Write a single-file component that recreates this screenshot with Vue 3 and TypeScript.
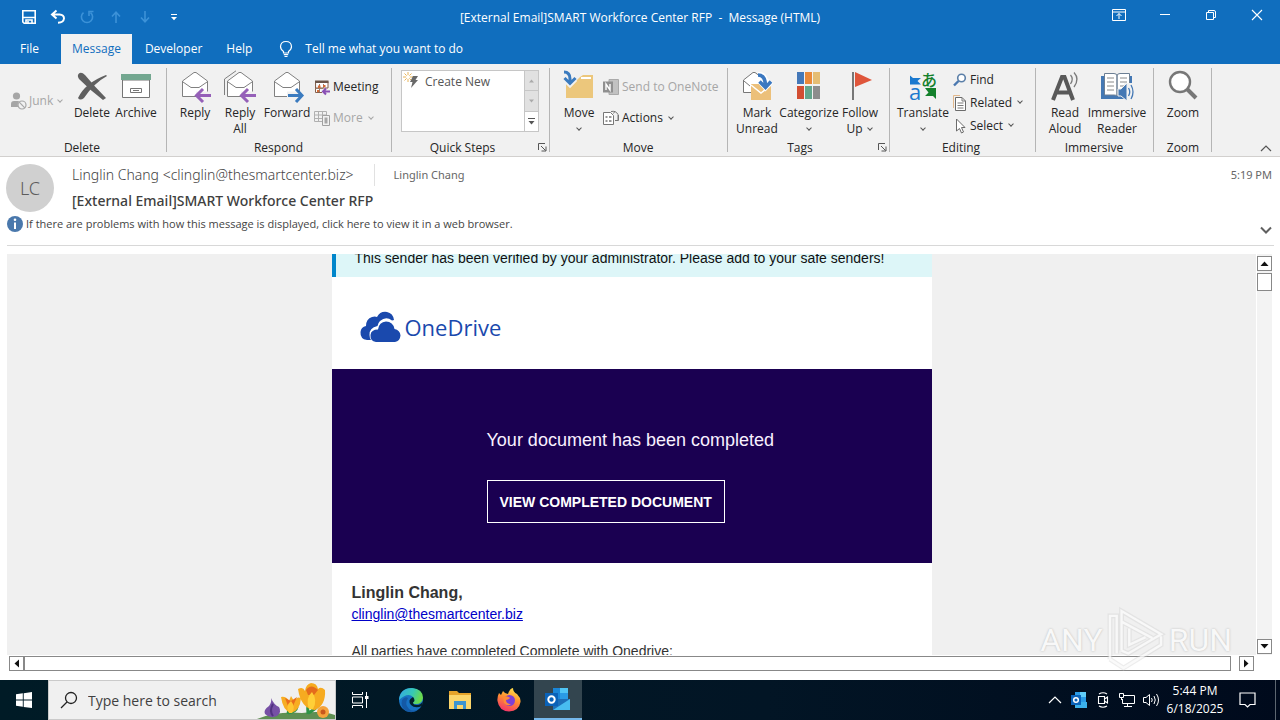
<script setup lang="ts">
import { ref } from 'vue'

const tabs = ['File', 'Message', 'Developer', 'Help']
const activeTab = ref('Message')
const search = ref('')
const sender = 'Linglin Chang <clinglin@thesmartcenter.biz>'
const subject = '[External Email]SMART Workforce Center RFP'
</script>

<template>
  <div class="window">
    <header class="titlebar">
      <div class="quick">
        <button aria-label="Save">
          <svg width="16" height="16" viewBox="0 0 16 16"><path d="M1.8 1.8H14.2V14.2H3.2L1.8 12.8Z M2 8.5H14 M5 14V11H11V14 M7 12V14" fill="none" stroke="#fff" stroke-width="1.6" /></svg>
        </button>
        <button aria-label="Undo">
          <svg width="16" height="16" viewBox="0 0 16 16"><path d="M6.5 1.5L2 5.5L6.5 9.5 M2.5 5.5H9.5Q14 5.8 14 9.5Q13.5 13.5 8 13.8" fill="none" stroke="#fff" stroke-width="2" /></svg>
        </button>
        <button aria-label="Redo">
          <svg width="16" height="16" viewBox="0 0 16 16"><path d="M4.5 3.6A5.6 5.6 0 1 0 11.5 3.6 M10 7V2.5H14.5" fill="none" stroke="#3c92d8" stroke-width="1.6" /></svg>
        </button>
        <button aria-label="Previous item">
          <svg width="16" height="16" viewBox="0 0 16 16"><path d="M8 14V3.5 M4 7.5L8 3.2L12 7.5" fill="none" stroke="#3c92d8" stroke-width="1.6" /></svg>
        </button>
        <button aria-label="Next item">
          <svg width="16" height="16" viewBox="0 0 16 16"><path d="M8 2V12.5 M4 8.5L8 12.8L12 8.5" fill="none" stroke="#3c92d8" stroke-width="1.6" /></svg>
        </button>
        <button aria-label="Customize toolbar">
          <svg width="16" height="16" viewBox="0 0 16 16"><path d="M5 5.5H11" stroke="#fff" /><path d="M5 8H11L8 11.2Z" fill="#fff" /></svg>
        </button>
      </div>
      <div class="title">{{ subject }}&nbsp; -&nbsp; Message (HTML)</div>
      <div class="winbtns">
        <button aria-label="Ribbon display options">
          <svg width="14" height="12" viewBox="0 0 14 12"><path d="M.5 .5H13.5V11.5H.5Z M.5 3H13.5 M7 10V4.5 M4.5 7L7 4.5L9.5 7" fill="none" stroke="#fff" /></svg>
        </button>
        <button aria-label="Minimize">
          <svg width="12" height="12" viewBox="0 0 12 12"><path d="M1 5.5H11" stroke="#fff" /></svg>
        </button>
        <button aria-label="Restore">
          <svg width="12" height="12" viewBox="0 0 12 12"><path d="M1.5 3.5H8.5V10.5H1.5Z M3.5 3.5V1.5H9Q10.5 1.5 10.5 3V8.5H8.5" fill="none" stroke="#fff" /></svg>
        </button>
        <button aria-label="Close">
          <svg width="12" height="12" viewBox="0 0 12 12"><path d="M1 1L11 11M11 1L1 11" stroke="#fff" stroke-width="1.1" /></svg>
        </button>
      </div>
    </header>

    <nav class="tabs">
      <button v-for="t in tabs" :key="t" :class="{ active: t === activeTab }" @click="activeTab = t">{{ t }}</button>
      <button class="tell">
        <svg width="14" height="18" viewBox="0 0 14 18"><path d="M4.5 13V11.5Q1.5 9.5 1.5 6.5Q1.8 1.5 7 1.5Q12.2 1.5 12.5 6.5Q12.5 9.5 9.5 11.5V13Z M4.8 14.6H9.2 M5.5 16.5H8.5" fill="none" stroke="#fff" stroke-width="1.2" /></svg>
        Tell me what you want to do
      </button>
    </nav>

    <section class="ribbon">
      <div class="group g-delete">
        <div class="tools">
          <button class="small off junk">
            <svg width="16" height="18" viewBox="0 0 16 18"><circle cx="5.5" cy="4" r="3.6" fill="#a6a6a6" /><path d="M0 15V12Q0 9 3 9H8Q6 12 7 15Z" fill="#a6a6a6" /><circle cx="11" cy="13" r="4" fill="#f1f1f1" stroke="#a6a6a6" stroke-width="1.2" /><path d="M8.2 10.2L13.8 15.8" stroke="#a6a6a6" stroke-width="1.2" /></svg>
            <span>Junk</span><i class="chev" />
          </button>
          <button class="big w42">
            <svg width="32" height="32" viewBox="0 0 32 32"><path d="M2.500 4Q5 1 9 5Q18 16 30 28L27 30Q15 21 3 9Q1 6 2.500 4Z" fill="#606060" /><path d="M31 6Q18 13 8 28Q4 31 2 28Q9 13 30 5Z" fill="#606060" /></svg>
            <span>Delete</span>
          </button>
          <button class="big w46">
            <svg width="32" height="32" viewBox="0 0 32 32"><path d="M2.5 10H29.5V27.5H2.5Z" fill="#fff" stroke="#757575" /><path d="M1 4H31V10H1Z" fill="#73a790" /><path d="M10.5 18.5H21.5V22.5H10.5Z" fill="none" stroke="#757575" /><path d="M13 20.5H19" stroke="#757575" /></svg>
            <span>Archive</span>
          </button>
        </div>
        <footer>Delete</footer>
      </div>

      <div class="group g-respond">
        <div class="tools">
          <button class="big w44">
            <svg width="32" height="32" viewBox="0 0 32 32"><path d="M3.5 26.5V11L15 2.5H17L28.5 11V26.5Z" fill="#fff" stroke="#808080" /><path d="M4 12L12 17.500H20L28 12" fill="none" stroke="#808080" /><path d="M17 25.5H32" stroke="#f1f1f1" stroke-width="8" /><path d="M18 25.5H32 M24 19L17.5 25.5L24 32" fill="none" stroke="#9560b8" stroke-width="3" /></svg>
            <span>Reply</span>
          </button>
          <button class="big w46">
            <svg width="32" height="32" viewBox="0 0 32 32"><path d="M.5 25V9L12 .8" fill="none" stroke="#808080" /><path d="M3.5 26.5V11L15 2.5H17L28.5 11V26.5Z" fill="#fff" stroke="#808080" /><path d="M4 12L12 17.500H20L28 12" fill="none" stroke="#808080" /><path d="M17 25.5H32" stroke="#f1f1f1" stroke-width="8" /><path d="M18 25.5H32 M24 19L17.5 25.5L24 32" fill="none" stroke="#9560b8" stroke-width="3" /></svg>
            <span>Reply<br>All</span>
          </button>
          <button class="big w48">
            <svg width="32" height="32" viewBox="0 0 32 32"><path d="M3.5 26.5V11L15 2.5H17L28.5 11V26.5Z" fill="#fff" stroke="#808080" /><path d="M4 12L12 17.500H20L28 12" fill="none" stroke="#808080" /><path d="M16 25.5H32" stroke="#f1f1f1" stroke-width="8" /><path d="M17 25.5H30 M25 19L31 25.5L25 32" fill="none" stroke="#3b7bbf" stroke-width="3" /></svg>
            <span>Forward</span>
          </button>
          <div class="stack two">
            <button class="small">
              <svg width="16" height="16" viewBox="0 0 16 16"><path d="M1.5 2.5H14V9H1.500V2.500V13.500H8" fill="#fff" stroke="#85604c" /><path d="M5.5 5V13 M9.5 5V9 M1.5 9.5H9" fill="none" stroke="#9b7c68" /><path d="M1 1.5H14.5V4H1Z" fill="#6b5549" /><path d="M4 6.5H6.5V9H4Z M9 6H11.5V8H9Z M3 11H5V13H3Z" fill="#d56a35" /><path d="M9 12.500H16 M12 9.500L9 12.500L12 15.500" fill="none" stroke="#8a4fb5" stroke-width="2" /></svg>
              <span>Meeting</span>
            </button>
            <button class="small off">
              <svg width="16" height="16" viewBox="0 0 16 16"><path d="M.5 1.5H12.5V5 M8 11.5H.5V1.5 M.5 5H12 M4.5 2V11 M8.5 2V6 M1 8.5H8" fill="none" stroke="#b0b0b0" /><path d="M8.5 5.5H15.5V15.5H8.5Z" fill="#f1f1f1" stroke="#a0a0a0" /><path d="M10.5 7.5H13.5V13.5H10.5Z" fill="#a6a6a6" /></svg>
              <span>More</span><i class="chev" />
            </button>
          </div>
        </div>
        <footer>Respond</footer>
      </div>

      <div class="group g-steps">
        <div class="tools">
          <div class="gallery">
            <button class="small">
              <svg width="22" height="20" viewBox="0 0 22 20"><path d="M6 0V10M1 5H11M2.5 1.5L9.5 8.5M9.5 1.5L2.5 8.5" stroke="#e8b45a" /><circle cx="6" cy="5" r="2" fill="#fff" /><path d="M11 4H16L13.5 8H16L9 16L10.5 10H8Z" fill="#696969" /></svg>
              <span>Create New</span>
            </button>
            <div class="updown">
              <button aria-label="Scroll up"><svg width="7" height="4" viewBox="0 0 7 4"><path d="M1 3.5L3.5 .5L6 3.5Z" fill="#aaa" /></svg></button>
              <button aria-label="Scroll down"><svg width="7" height="4" viewBox="0 0 7 4"><path d="M1 .5L3.5 3.5L6 .5Z" fill="#aaa" /></svg></button>
              <button aria-label="More steps" class="on"><svg width="7" height="7" viewBox="0 0 7 7"><path d="M0 .5H7" stroke="#555" /><path d="M.5 3H6.5L3.5 6.5Z" fill="#555" /></svg></button>
            </div>
          </div>
        </div>
        <footer>Quick Steps</footer>
        <button class="launcher" aria-label="Quick Steps options"><svg width="9" height="9" viewBox="0 0 9 9"><path d="M.5 7V.5H7 M3 3L7.5 7.5 M8 3.5V8H3.5" fill="none" stroke="#555" /></svg></button>
      </div>

      <div class="group g-move">
        <div class="tools">
          <button class="big w46">
            <svg width="32" height="32" viewBox="0 0 32 32"><path d="M3 28V11H13L17 7L20 5H30V28Z" fill="#ecc77c" /><path d="M18 8H28" stroke="#fff" stroke-width="2" /><path d="M1 1.5Q7 1 7 9V13 M2 9L7 14L12 9" fill="none" stroke="#f1f1f1" stroke-width="6" /><path d="M1 2Q7 2 7 9V13 M1.5 8L7 13.5L12.500 8" fill="none" stroke="#3b7bbf" stroke-width="3" /></svg>
            <span>Move</span><i class="chev" />
          </button>
          <div class="stack two">
            <button class="small off">
              <svg width="16" height="16" viewBox="0 0 16 16"><path d="M6 .5H15.5V15.5H6Z" fill="#c2c2c2" stroke="#aaa" /><path d="M0 2.5H10V13.5H0Z" fill="#909090" /><path d="M3 11V5L7 11V5" fill="none" stroke="#fff" stroke-width="1.4" /></svg>
              <span>Send to OneNote</span>
            </button>
            <button class="small">
              <svg width="16" height="16" viewBox="0 0 16 16"><path d="M.5 2.5H7.5L10.5 5.5V14.5H.5Z" fill="#fff" stroke="#777" /><path d="M2.5 7H4.5M2.5 11H4.5M6 7H8.5M6 11H8.5" stroke="#777" stroke-width="1.6" /><path d="M8 1.5Q13 .5 15 4.5V10 M10.5 3.5L12 1M12 10.500H15.500V5" fill="none" stroke="#777" /></svg>
              <span>Actions</span><i class="chev" />
            </button>
          </div>
        </div>
        <footer>Move</footer>
      </div>

      <div class="group g-tags">
        <div class="tools">
          <button class="big w46">
            <svg width="32" height="32" viewBox="0 0 32 32"><path d="M2.5 22.5V10L12 2.5H14L24 10V22.5Z" fill="#fff" stroke="#777" /><path d="M3 11L9 16" stroke="#777" /><path d="M10 14H30V30H10Z" fill="#ecc07a" /><path d="M10 15L20 23L30 15" fill="none" stroke="#fff" stroke-width="1.5" /><path d="M17 5Q24 4 24.500 14 M19 11L24.500 17L30 11" fill="none" stroke="#fff" stroke-width="6" /><path d="M17 5Q24 5 24.500 15 M18.500 11.500L24.500 17.500L30 11.500" fill="none" stroke="#3b78c0" stroke-width="3.500" /></svg>
            <span>Mark<br>Unread</span>
          </button>
          <button class="big w58">
            <svg width="32" height="32" viewBox="0 0 32 32"><path d="M4 2H11V14H4Z" fill="#4478b8" /><path d="M12 2H19V14H12Z" fill="#e98939" /><path d="M20 2H27V14H20Z" fill="#e5bd73" /><path d="M4 16H11V29H4Z" fill="#d24e32" /><path d="M12 16H19V29H12Z" fill="#63a68c" /><path d="M20 16H27V29H20Z" fill="#8d8d8d" /></svg>
            <span>Categorize</span><i class="chev" />
          </button>
          <button class="big w44">
            <svg width="32" height="32" viewBox="0 0 32 32"><path d="M9 2V30" stroke="#777" stroke-width="2" /><path d="M11 2L28 10L11 17Z" fill="#df563b" /></svg>
            <span>Follow<br>Up <i class="chev" /></span>
          </button>
        </div>
        <footer>Tags</footer>
        <button class="launcher" aria-label="Tags options"><svg width="9" height="9" viewBox="0 0 9 9"><path d="M.5 7V.5H7 M3 3L7.5 7.5 M8 3.5V8H3.5" fill="none" stroke="#555" /></svg></button>
      </div>

      <div class="group g-editing">
        <div class="tools">
          <button class="big w58">
            <svg width="32" height="32" viewBox="0 0 32 32"><path d="M3 5.500L6 8H14L10.500 11L14 14.500H3Z" fill="#1b79cf" /><path d="M29 18V29L26 26H18L21.500 22.500L18 18Z" fill="#14812c" /><text x="2" y="30" class="glyph-a">a</text><text x="14" y="16" class="glyph-j">あ</text></svg>
            <span>Translate</span><i class="chev" />
          </button>
          <div class="stack three">
            <button class="small">
              <svg width="14" height="14" viewBox="0 0 14 14"><circle cx="8.500" cy="5" r="3.800" fill="#fff" stroke="#5b7fa8" stroke-width="1.600" /><path d="M5.500 8L1 12.500" stroke="#4a78b0" stroke-width="2.400" /></svg>
              <span>Find</span>
            </button>
            <button class="small">
              <svg width="14" height="16" viewBox="0 0 14 16"><path d="M.5 13V.5H7" fill="none" stroke="#e3b98d" /><path d="M2.500 2.500H9L12.500 6V15.500H2.500Z" fill="#fff" stroke="#6b6b6b" /><path d="M9 2.500V6H12.500 M4.500 8H10.500M4.500 10.500H10.500M4.500 13H10.500" fill="none" stroke="#7b7b7b" /></svg>
              <span>Related</span><i class="chev" />
            </button>
            <button class="small">
              <svg width="14" height="16" viewBox="0 0 14 16"><path d="M3.500 1V13L6.500 10.500L8.500 15L10.500 14L8.500 9.500H12Z" fill="#fff" stroke="#6b6b6b" /></svg>
              <span>Select</span><i class="chev" />
            </button>
          </div>
        </div>
        <footer>Editing</footer>
      </div>

      <div class="group g-immersive">
        <div class="tools">
          <button class="big w46">
            <svg width="32" height="32" viewBox="0 0 32 32"><path d="M4 30L13 7H15.500L24 30 M8 22.500H20" fill="none" stroke="#595959" stroke-width="4" /><path d="M21.500 5Q25 9 21.500 14 M25 2.500Q31 9 25 17" fill="none" stroke="#7a7a7a" stroke-width="1.300" /></svg>
            <span>Read<br>Aloud</span>
          </button>
          <button class="big w58">
            <svg width="32" height="32" viewBox="0 0 32 32"><path d="M0 6H31V29H0Z" fill="#4478b4" /><path d="M3.500 3.500H13Q16 3.500 16 6V26Q15 25 13 25H3.500Z M28.500 3.500H19Q16 3.500 16 6V26Q17 25 19 25H28.500Z" fill="#fff" stroke="#6c7f94" /><path d="M6 8H13M6 12H13M6 16H13M6 20H13M19 8H26M19 12H26M19 16H24" stroke="#8a8a8a" /><path d="M23 13H34V32H23Z" fill="#f1f1f1" /><path d="M17 19H20L26 13V31L20 26H17Z" fill="#4478b4" stroke="#f1f1f1" /><path d="M27.500 18Q30 22 27.500 26 M30 15Q34 22 30 29" fill="none" stroke="#4478b4" stroke-width="1.300" /></svg>
            <span>Immersive<br>Reader</span>
          </button>
        </div>
        <footer>Immersive</footer>
      </div>

      <div class="group g-zoom">
        <div class="tools">
          <button class="big w46">
            <svg width="32" height="32" viewBox="0 0 32 32"><path d="M19 18L29 28" stroke="#777" stroke-width="4" /><circle cx="13" cy="12" r="10" fill="#fff" stroke="#777" stroke-width="2.400" /></svg>
            <span>Zoom</span>
          </button>
        </div>
        <footer>Zoom</footer>
      </div>
      <button class="collapse" aria-label="Collapse the ribbon"><svg width="12" height="7" viewBox="0 0 12 7"><path d="M1 6L6 1L11 6" fill="none" stroke="#555" stroke-width="1.200" /></svg></button>
    </section>

    <section class="mailhead">
      <div class="who">
        <div class="avatar">LC</div>
        <div class="lines">
          <div class="from"><span class="sender">{{ sender }}</span><span class="to">Linglin Chang</span><time>5:19 PM</time></div>
          <h1>{{ subject }}</h1>
        </div>
      </div>
      <div class="info">
        <svg width="16" height="16" viewBox="0 0 16 16"><circle cx="8" cy="8" r="8" fill="#4a78ac" /><path d="M8 6.500V13" stroke="#fff" stroke-width="2" /><circle cx="8" cy="3.800" r="1.300" fill="#fff" /></svg>
        <button>If there are problems with how this message is displayed, click here to view it in a web browser.</button>
        <button class="expand" aria-label="Expand header"><svg width="12" height="8" viewBox="0 0 12 8"><path d="M1 1.500L6 6.500L11 1.500" fill="none" stroke="#606060" stroke-width="2" /></svg></button>
      </div>
    </section>

    <main class="reader">
      <div class="view">
        <article class="email">
          <p class="banner">This sender has been verified by your administrator. Please add to your safe senders!</p>
          <div class="logo">
            <svg width="41" height="32" viewBox="0 0 41 32"><path d="M9 29H7Q0 28 .5 21Q1 16 6 15Q6 8 12 6Q15 5 17 6Q20 0 27 1Q33 2 34 9L32 9.500Q26 5 20 10Q18 12 17.500 15Q9 17 9.500 24Q9.500 27 11 29Z" fill="#1a49ad" /><path d="M16 31Q10 30 10.500 24Q11 18.500 18 18.500Q19 11 26 10.500Q33 10.500 34.500 18Q40 19 40.500 24.500Q40 30 35 31Z" fill="#1a49ad" /></svg>
            <span>OneDrive</span>
          </div>
          <div class="hero">
            <p>Your document has been completed</p>
            <a href="#">VIEW COMPLETED DOCUMENT</a>
          </div>
          <div class="body">
            <h2>Linglin Chang,</h2>
            <a href="#">clinglin@thesmartcenter.biz</a>
            <p>All parties have completed Complete with Onedrive:</p>
          </div>
        </article>
      </div>
      <div class="vbar">
        <button aria-label="Scroll up"><svg width="9" height="5" viewBox="0 0 9 5"><path d="M.5 5L4.500 .5L8.500 5Z" fill="#111" /></svg></button>
        <div class="thumb" />
        <button class="end" aria-label="Scroll down"><svg width="9" height="5" viewBox="0 0 9 5"><path d="M.5 0L4.500 4.500L8.500 0Z" fill="#111" /></svg></button>
      </div>
      <div class="hbar">
        <button aria-label="Scroll left"><svg width="5" height="9" viewBox="0 0 5 9"><path d="M5 .5L.5 4.500L5 8.500Z" fill="#111" /></svg></button>
        <div class="track" />
        <button class="end" aria-label="Scroll right"><svg width="5" height="9" viewBox="0 0 5 9"><path d="M0 .5L4.500 4.500L0 8.500Z" fill="#111" /></svg></button>
      </div>
      <div class="mark" aria-hidden="true">
        <span>ANY</span>
        <svg width="54" height="64" viewBox="3 0 56 66"><path d="M4 53V8H11V47 M16 44V3L57 27L23 47L16 44 M16 14L48 31 M4 53L18 62L57 38V29 M24 21V38L41 30" fill="none" stroke="#cfcfcf" stroke-width="5" opacity=".45" /><path d="M4 53V8H11V47 M16 44V3L57 27L23 47L16 44 M16 14L48 31 M4 53L18 62L57 38V29 M24 21V38L41 30" fill="none" stroke="#fafafa" stroke-width="2.500" /></svg>
        <span>RUN</span>
      </div>
    </main>

    <footer class="taskbar">
      <button class="start" aria-label="Start"><svg width="16" height="16" viewBox="0 0 16 16"><path d="M0 2.200L6.800 1.300V7.500H0Z M7.700 1.200L16 0V7.500H7.700Z M0 8.400H6.800V14.700L0 13.800Z M7.700 8.400H16V16L7.700 14.900Z" fill="#fff" /></svg></button>
      <div class="search">
        <svg width="18" height="18" viewBox="0 0 18 18"><circle cx="11" cy="7" r="5.500" fill="none" stroke="#222" stroke-width="1.300" /><path d="M7 11L1 17" stroke="#222" stroke-width="1.300" /></svg>
        <input v-model="search" type="text" aria-label="Search" placeholder="Type here to search">
        <svg class="flowers" width="78" height="38" viewBox="0 0 78 38">
          <path d="M0 38Q20 30 45 32Q65 29 78 34V38Z" fill="#5e8f53" />
          <path d="M51 33Q50 22 53 15M31 33Q32 27 33 22M51 32Q58 29 64 21M31 32Q39 31 40 26" fill="none" stroke="#2e9447" stroke-width="3" />
          <path d="M14 17Q17 24 22 26Q25 31 20 35Q13 38 8 33Q6 29 12 25Q15 21 14 17Z" fill="#7650a5" /><path d="M16 23Q12 30 16 35" fill="none" stroke="#513281" stroke-width="2" />
          <path d="M24 16Q29 15 32 20L34 15L37 20Q40 15 44 17Q43 30 34 32Q26 30 24 16Z" fill="#f7ad22" /><path d="M28 17L34 20L40 16L36 25H31Z" fill="#e96d1c" /><path d="M32 32Q28 25 34 20Q39 26 35 32" fill="#ffc632" />
          <path d="M41 8Q46 5 48 10Q49 3 54 2Q60 2 61 8Q64 5 68 9Q69 24 58 29Q44 28 41 8Z" fill="#f6ab20" /><path d="M49 9Q54 2 61 9L57 14H51Z" fill="#e46b1c" /><path d="M52 28Q48 17 55 11Q61 19 56 28" fill="#ffcf38" />
          <circle cx="66" cy="31" r="6" fill="#f5a33c" /><circle cx="66" cy="31" r="2.500" fill="#c8571d" />
        </svg>
      </div>
      <div class="apps">
        <button class="view-tasks" aria-label="Task View"><svg width="18" height="16" viewBox="0 0 18 16"><path d="M1.500 0V2.500H11.500V0 M1.500 16V13.500H11.500V16 M1.500 5H11.500V11H1.500Z M15.500 0V16" fill="none" stroke="#fff" /><path d="M14 4H17.500V7H14Z" fill="#fff" /></svg></button>
        <button aria-label="Edge">
          <svg width="24" height="24" viewBox="0 0 24 24"><defs><linearGradient id="edge" x1="0" y1="0" x2="1" y2=".3"><stop offset="0" stop-color="#35a8e8" /><stop offset=".6" stop-color="#36c8b5" /><stop offset="1" stop-color="#6ada4c" /></linearGradient></defs><circle cx="12" cy="12" r="12" fill="#1873c4" /><path d="M0 12Q1 0 13 0Q24 1 24 10Q23 16 17 16Q13 16 14 14Q16 12 14 9Q9 4 0 12Z" fill="url(#edge)" /><path d="M9 10Q5 16 10 21Q14 24 20 21Q14 26 7 23Q1 19 3 12Q6 8 9 10Z" fill="#1459a5" /><path d="M14 9Q17 13 14 14.500Q14 17 18 17Q22 17 24 13L23 18Q16 21 12 17Q8 12 14 9Z" fill="#02202d" /></svg>
        </button>
        <button aria-label="File Explorer"><svg width="22" height="20" viewBox="0 0 22 20"><path d="M0 1H8L10 3H22V19H0Z" fill="#e5a32a" /><path d="M0 5H22V19H0Z" fill="#fbd56b" /><path d="M5 19V11H17V19H14V15H8V19Z" fill="#3d94d0" /></svg></button>
        <button aria-label="Firefox">
          <svg width="24" height="24" viewBox="0 0 24 24"><defs><linearGradient id="fox" x1=".7" y1="0" x2=".3" y2="1"><stop offset="0" stop-color="#ffe04a" /><stop offset=".45" stop-color="#ff9130" /><stop offset="1" stop-color="#f4306c" /></linearGradient></defs><path d="M2 5L4 7L6 3L8 5L11 6Q13 0 16 0Q16 4 20 6Q24 10 23.500 14Q22 23 12 23.500Q2 23 .5 13Q0 9 2 5Z" fill="url(#fox)" /><circle cx="12.500" cy="12.500" r="5.500" fill="#7d3fd6" /><path d="M6 9Q10 7 13 10Q11 12 9 12Q9 16 14 16Q10 19 7 15Z" fill="#ff8a36" /></svg>
        </button>
        <button class="running" aria-label="Outlook">
          <svg width="26" height="24" viewBox="0 0 26 24"><path d="M8 1H23V16H8Z" fill="#1a86d8" /><path d="M15 1H23V6H15Z" fill="#50c5f5" /><path d="M15 6H23V12H15Z" fill="#2a9be5" /><path d="M8 12L25 12V23H8Z" fill="#1d6fb8" /><path d="M25 12V23H8Z" fill="#48bdf0" /><path d="M0 6H13V19H0Z" fill="#0a62b8" /><circle cx="6.500" cy="12.500" r="3.200" fill="none" stroke="#fff" stroke-width="2" /></svg>
        </button>
      </div>
      <div class="tray">
        <button aria-label="Show hidden icons"><svg width="14" height="8" viewBox="0 0 14 8"><path d="M1 7L7 1L13 7" fill="none" stroke="#fff" stroke-width="1.200" /></svg></button>
        <button aria-label="Outlook status"><svg width="16" height="16" viewBox="0 0 16 16"><path d="M4 0H15V15H4Z" fill="#2a9be5" /><path d="M9 0H15V5H9Z" fill="#60cdf8" /><path d="M4 10H16V16H4Z" fill="#3cb1ea" /><path d="M0 3H10V13H0Z" fill="#0a62b8" /><circle cx="5" cy="8" r="2.300" fill="none" stroke="#fff" stroke-width="1.500" /></svg></button>
        <button aria-label="Meet Now"><svg width="16" height="16" viewBox="0 0 16 16"><path d="M3.500 4.500H9.500V11.500H3.500Z M9.500 7L12.500 5V11L9.500 9 M4 2Q8 -.5 12 2 M4 14Q8 16.500 12 14" fill="none" stroke="#fff" stroke-width="1.100" /></svg></button>
        <button aria-label="Network"><svg width="16" height="16" viewBox="0 0 16 16"><path d="M5 3.500H15.500V11.500H3.500V7 M8.500 11.500V14.500M5 14.500H13 M.5 1.500H4.500V5.500H.5Z M2.500 5.500V8" fill="none" stroke="#fff" /></svg></button>
        <button aria-label="Volume"><svg width="17" height="14" viewBox="0 0 17 14"><path d="M.5 4.500H3L6.500 1.500V12.500L3 9.500H.5Z M8.500 5Q10 7 8.500 9 M11 3Q13.500 7 11 11 M13.500 1Q17.500 7 13.500 13" fill="none" stroke="#fff" /></svg></button>
        <button class="clock">5:44 PM<br>6/18/2025</button>
        <button class="note" aria-label="Notifications"><svg width="17" height="16" viewBox="0 0 17 16"><path d="M1 1H16V12.500H11L8.500 15L6 12.500H1Z" fill="none" stroke="#fff" stroke-width="1.200" /></svg></button>
        <button class="peek" aria-label="Show desktop" />
      </div>
    </footer>
  </div>
</template>

<style>
html, body { margin: 0; height: 100%; }
</style>

<style scoped>
.window { height: 100vh; display: flex; flex-direction: column; background: #fff; font: 12px/16px "Open Sans", "Noto Sans", sans-serif; color: #262626; overflow: hidden; }
.window * { box-sizing: border-box; }
button { font: inherit; color: inherit; background: none; border: 0; padding: 0; margin: 0; }
svg { display: block; flex: none; overflow: visible; }
h1, h2, p { margin: 0; }

.titlebar { display: flex; height: 34px; background: #106ebe; color: #fff; }
.quick, .winbtns { flex: 1; display: flex; align-items: center; }
.quick button { width: 29px; display: flex; justify-content: center; }
.quick button:first-child { margin-left: 14px; }
.title { padding-top: 1px; line-height: 33px; white-space: nowrap; }
.winbtns { justify-content: flex-end; height: 30px; }
.winbtns button { width: 46px; display: flex; justify-content: center; }

.tabs { display: flex; height: 30px; background: #106ebe; color: #fff; }
.tabs button { padding: 0 11px; margin-right: 2px; }
.tabs button:first-child { padding: 0 20px; }
.tabs .active { background: #f1f1f1; color: #106ebe; }
.tabs .tell { display: flex; align-items: center; gap: 12px; padding-left: 14px; }

.ribbon { display: flex; position: relative; height: 93px; background: #f1f1f1; border-bottom: 1px solid #d2d0ce; }
.group { position: relative; display: flex; flex-direction: column; padding-top: 4px; }
.group::after { content: ""; position: absolute; right: 0; top: 4px; bottom: 4px; width: 1px; background: #b5b5b5; }
.tools { display: flex; flex: 1; }
.group footer { text-align: center; height: 16px; }
.g-delete { width: 167px; padding-left: 9px; }
.g-delete footer { padding-right: 12px; }
.g-respond { width: 225px; padding-left: 6px; }
.g-respond footer { padding-right: 8px; }
.g-steps { width: 158px; padding-left: 9px; }
.g-steps footer { padding-right: 26px; }
.g-move { width: 178px; padding-left: 6px; }
.g-move footer { padding-right: 8px; }
.g-tags { width: 162px; padding-left: 6px; }
.g-tags footer { padding-right: 24px; }
.g-editing { width: 146px; padding-left: 4px; }
.g-editing footer { padding-right: 8px; }
.g-immersive { width: 118px; padding-left: 6px; }
.g-immersive footer { padding-right: 8px; }
.g-zoom { width: 58px; padding-left: 6px; padding-right: 6px; }

.big { display: flex; flex-direction: column; align-items: center; text-align: center; padding-top: 2px; white-space: nowrap; }
.big svg { margin-bottom: 3px; }
.w42 { width: 42px; }
.w44 { width: 44px; }
.w46 { width: 46px; }
.w48 { width: 48px; }
.w58 { width: 58px; }
.big > .chev { margin-top: 5px; }
.chev { display: inline-block; width: 4px; height: 4px; border-right: 1px solid #555; border-bottom: 1px solid #555; transform: rotate(45deg); margin: 0 2px 3px; }
.small { display: flex; align-items: center; gap: 3px; white-space: nowrap; }
.small .chev { margin-left: 3px; }
.off { color: #a6a6a6; }
.off .chev { border-color: #a6a6a6; }
.junk { width: 62px; height: 66px; padding-left: 2px; gap: 2px; }
.stack { display: flex; flex-direction: column; padding-left: 1px; }
.g-respond .stack { padding-left: 3px; }
.two { padding-top: 8px; gap: 9px; }
.two .small { height: 22px; }
.three .small { height: 23px; }
.glyph-a { font: 22px "Open Sans", sans-serif; fill: #1b79cf; }
.glyph-j { font: 500 16px "Noto Sans CJK JP", sans-serif; fill: #14812c; }

.gallery { display: flex; width: 138px; height: 62px; margin-top: 2px; border: 1px solid #c6c6c6; background: #fff; }
.gallery .small { flex: 1; height: 22px; gap: 1px; color: #555; }
.updown { width: 14px; display: flex; flex-direction: column; border-left: 1px solid #c6c6c6; }
.updown button { flex: 1; display: flex; align-items: center; justify-content: center; background: #e1e1e1; border-bottom: 1px solid #c6c6c6; }
.updown .on { background: #fff; border: 0; }
.launcher { position: absolute; right: 3px; bottom: 4px; }
.collapse { position: absolute; right: 8px; bottom: 4px; }

.mailhead { margin: 0 6px 8px 7px; border-bottom: 1px solid #d8d8d8; height: 89px; padding-top: 7px; font-family: "Noto Sans", "Open Sans", sans-serif; }
.who { display: flex; gap: 18px; }
.avatar { width: 48px; height: 48px; margin-left: -1px; border-radius: 50%; background: #d0d0d0; color: #5c5c5c; display: flex; align-items: center; justify-content: center; font-size: 18px; font-weight: 300; }
.lines { flex: 1; }
.from { display: flex; align-items: center; height: 22px; color: #666; font-size: 11px; }
.sender { font-size: 14px; font-weight: 300; line-height: 22px; padding-right: 20px; border-right: 1px solid #e1e1e1; color: #444; }
.to { padding-left: 19px; }
time { margin-left: auto; padding-right: 2px; }
h1 { font-size: 14px; line-height: 20px; font-weight: 500; color: #404040; padding-top: 5px; }
.info { display: flex; align-items: center; gap: 3px; font-family: "Open Sans", sans-serif; font-size: 11px; margin-top: 4px; color: #444; }
.expand { margin-left: auto; padding: 10px 2px 0 0; height: 16px; }

.reader { flex: 1; min-height: 0; position: relative; display: grid; grid-template: minmax(0, 1fr) 16px / minmax(0, 1fr) 16px; row-gap: 1px; padding: 0 8px 8px 7px; }
.view { overflow: hidden; background: #f0f0f0; }
.vbar, .hbar { display: flex; background: #f3f3f3; }
.vbar { flex-direction: column; padding: 2px 0 1px; margin-left: 1px; }
.vbar button, .vbar .thumb { width: 15px; height: 15px; border: 1px solid #888; background: #fff; display: flex; align-items: center; justify-content: center; }
.vbar .thumb { height: 18px; margin-top: 2px; }
.vbar .end { margin-top: auto; }
.hbar { padding: 0 2px; background: #fff; }
.hbar button, .track { height: 15px; border: 1px solid #888; background: #fff; display: flex; align-items: center; justify-content: center; }
.hbar button { width: 15px; }
.track { flex: 1; }
.hbar .end { margin-left: 8px; }

.email { width: 600px; margin: 0 auto; min-height: 100%; background: #fff; font-family: "Liberation Sans", Arial, sans-serif; }
.banner { height: 23px; display: flex; align-items: flex-end; padding: 0 0 11px 19px; border-left: 4px solid #0086cb; background: #ddf6f8; color: #111; font-size: 14px; white-space: nowrap; }
.logo { height: 92px; display: flex; align-items: center; gap: 4px; padding: 8px 0 0 28px; color: #1a49ad; font: 22px/32px "Open Sans", sans-serif; }
.hero { height: 194px; background: #1a0051; color: #f8f0ff; padding: 60px 155px; }
.hero p { font-size: 18px; line-height: 22px; white-space: nowrap; }
.hero a { display: inline-block; margin-top: 29px; border: 1px solid #fff; color: #fff; font-weight: 700; font-size: 14px; line-height: 40px; padding: 1px 12px 0; text-decoration: none; white-space: nowrap; }
.body { padding: 20px; font-size: 14px; color: #333; }
.body h2 { font-size: 16px; line-height: 20px; }
.body a { display: block; line-height: 22px; color: #0000c8; }
.body p { margin-top: 17px; line-height: 18px; }

.mark { position: absolute; right: 48px; bottom: 8px; display: flex; align-items: center; gap: 6px; pointer-events: none; font: 32px/64px Roboto, sans-serif; color: #fafafa; text-shadow: 0 0 2px #aaa; opacity: 0.8; }

.taskbar { display: flex; height: 40px; background: linear-gradient(90deg, #001b26, #021525 60%, #000a1c); color: #fff; }
.start { width: 48px; display: flex; align-items: center; justify-content: center; }
.search { width: 288px; display: flex; align-items: center; background: #f0f0f0; border: 1px solid #cacaca; padding-left: 11px; }
.search input { flex: 1; min-width: 0; border: 0; outline: 0; background: none; font: 14px/20px "Open Sans", sans-serif; padding: 2px 0 0 10px; }
.search input::placeholder { color: #404040; opacity: 1; }
.apps { display: flex; gap: 1px; }
.apps button { width: 48px; display: flex; align-items: center; justify-content: center; }
.apps .view-tasks { margin-right: 2px; }
.apps .running { background: #33454f; border-bottom: 2px solid #76b9ed; }
.tray { margin-left: auto; display: flex; }
.tray button { width: 24px; display: flex; align-items: center; justify-content: center; }
.tray .clock { width: 64px; font-size: 12px; line-height: 18px; display: block; text-align: center; white-space: nowrap; }
.tray .note { width: 40px; }
.tray .peek { width: 5px; margin-left: 8px; border-left: 1px solid #5d6670; }
</style>
